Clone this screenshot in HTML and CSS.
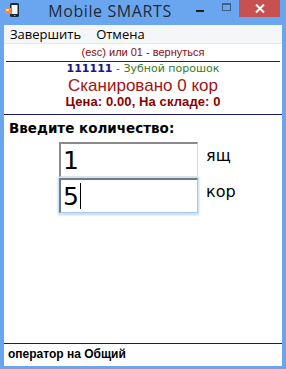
FILE: index.html
```html
<!DOCTYPE html>
<html>
<head>
<meta charset="utf-8">
<link rel="stylesheet" href="styles.css">
</head>
<body>
<div class="window">
  <div class="titlebar">
    <svg class="appicon" width="16" height="16" viewBox="0 0 16 16">
      <rect x="6" y="1" width="9" height="14" rx="1.5" fill="#1e2a38"/>
      <rect x="7.5" y="3" width="6" height="9" fill="#f4f6f8"/>
      <rect x="10" y="13" width="1.5" height="1" fill="#9aa6b2"/>
      <rect x="1" y="6" width="6" height="6" fill="#f08a4b"/>
      <rect x="2" y="7" width="3" height="2" fill="#fbd2b4"/>
    </svg>
    <div class="title">Mobile SMARTS</div>
    <div class="controls">
      <div class="ctl min"><span class="dash"></span></div>
      <div class="ctl max"><span class="box"></span></div>
      <div class="ctl close">
        <svg width="10" height="9" viewBox="0 0 10 9"><path d="M1 0.5 L9 8.5 M9 0.5 L1 8.5" stroke="#fff" stroke-width="2"/></svg>
      </div>
    </div>
  </div>
  <div class="client">
    <div class="menubar">
      <span class="menuitem">Завершить</span>
      <span class="menuitem">Отмена</span>
    </div>
    <div class="hint">(esc) или 01 - вернуться</div>
    <div class="rule red"></div>
    <div class="product"><b class="code">111111</b> <span class="name">- Зубной порошок</span></div>
    <div class="scanned">Сканировано 0 кор</div>
    <div class="price">Цена: 0.00, На складе: 0</div>
    <div class="rule navy"></div>
    <div class="prompt">Введите количество:</div>
    <div class="fields">
      <div class="row">
        <div class="field">1</div>
        <div class="unit">ящ</div>
      </div>
      <div class="row">
        <div class="field focused">5<span class="caret"></span></div>
        <div class="unit">кор</div>
      </div>
    </div>
    <div class="spacer"></div>
    <div class="rule navy bottom"></div>
    <div class="status">оператор на Общий</div>
  </div>
</div>
</body>
</html>
```
FILE: styles.css
```css
html, body {
  margin: 0;
  padding: 0;
}
body {
  width: 286px;
  height: 369px;
  overflow: hidden;
}
.window {
  width: 286px;
  height: 369px;
  background: #6aa6ef;
  display: flex;
  flex-direction: column;
  box-sizing: border-box;
  padding-bottom: 3px;
}
.titlebar {
  height: 25px;
  display: flex;
  align-items: flex-start;
  flex: none;
}
.appicon {
  margin: 2px 0 0 4px;
  flex: none;
}
.title {
  flex: 1;
  text-align: center;
  font-family: "Open Sans", "Noto Sans", sans-serif;
  font-size: 16px;
  letter-spacing: 0.6px;
  line-height: 22px;
  color: #1f2a36;
  padding-left: 14px;
}
.controls {
  display: flex;
  margin-right: 6px;
}
.ctl {
  height: 17px;
  display: flex;
  align-items: center;
  justify-content: center;
}
.min {
  width: 27px;
}
.dash {
  width: 8px;
  height: 2px;
  background: #1f1f1f;
  margin-top: 4px;
}
.max {
  width: 26px;
}
.box {
  width: 7px;
  height: 5px;
  border: 1px solid #3e5f86;
  border-top-width: 2px;
  margin-top: -4px;
}
.close {
  width: 41px;
  background: #c75050;
}
.client {
  flex: 1;
  margin: 0 4px;
  background: #fff;
  display: flex;
  flex-direction: column;
  font-family: "Liberation Sans", Arial, sans-serif;
}
.menubar {
  height: 18px;
  flex: none;
  background: #f5f6f7;
  border-bottom: 1px solid #e6e7e8;
  display: flex;
  align-items: center;
  font-family: "Open Sans", "Noto Sans", sans-serif;
  font-size: 13px;
  color: #000;
  padding-left: 6px;
  gap: 15px;
}
.hint {
  text-align: center;
  font-size: 11px;
  line-height: 16px;
  color: #8b0a0a;
}
.rule {
  height: 1px;
  flex: none;
}
.rule.red {
  background: #8b0000;
  margin: 1px 2px 0;
}
.product {
  text-align: center;
  font-family: "DejaVu Sans", sans-serif;
  font-size: 11px;
  line-height: 14px;
}
.code {
  color: #16168a;
}
.name {
  color: #3a7a26;
}
.scanned {
  text-align: center;
  font-size: 17px;
  line-height: 18px;
  color: #a01414;
  margin-top: 1px;
}
.price {
  text-align: center;
  font-size: 13px;
  font-weight: bold;
  letter-spacing: 0.1px;
  color: #8b0000;
  line-height: 14px;
}
.rule.navy {
  background: #191970;
  margin-top: 5px;
}
.prompt {
  font-family: "DejaVu Sans", sans-serif;
  font-weight: bold;
  font-size: 13.5px;
  line-height: 18px;
  color: #000;
  padding-left: 5px;
  margin-top: 4px;
}
.fields {
  display: flex;
  flex-direction: column;
  margin-top: 5px;
  padding-left: 55px;
  gap: 1px;
}
.row {
  display: flex;
  align-items: flex-start;
  gap: 8px;
}
.field {
  box-sizing: border-box;
  width: 139px;
  height: 35px;
  border-top: 2px solid #8a8a8a;
  border-left: 2px solid #8a8a8a;
  border-right: 1px solid #dadada;
  border-bottom: 1px solid #e4e4e4;
  font-family: "DejaVu Sans", sans-serif;
  font-size: 25px;
  line-height: 31px;
  padding-left: 2px;
  color: #000;
  display: flex;
  align-items: center;
}
.field.focused {
  border-top: 2px solid #6e7d8c;
  border-left: 2px solid #6e7d8c;
  border-right: 1px solid #a9c9ec;
  border-bottom: 1px solid #a9c9ec;
  box-shadow: 0 0 0 1px #cfe3f8, 0 1px 2px 1px #b7d4f2;
}
.caret {
  width: 1px;
  height: 26px;
  background: #000;
  margin-left: 1px;
}
.unit {
  font-family: "DejaVu Sans", sans-serif;
  font-size: 16px;
  line-height: 28px;
  color: #000;
}
.spacer {
  flex: 1;
}
.rule.bottom {
  margin-top: 0;
}
.status {
  box-sizing: border-box;
  font-weight: bold;
  font-size: 12px;
  line-height: 18px;
  padding: 1px 0 0 4px;
  color: #000;
  height: 22px;
}
```
